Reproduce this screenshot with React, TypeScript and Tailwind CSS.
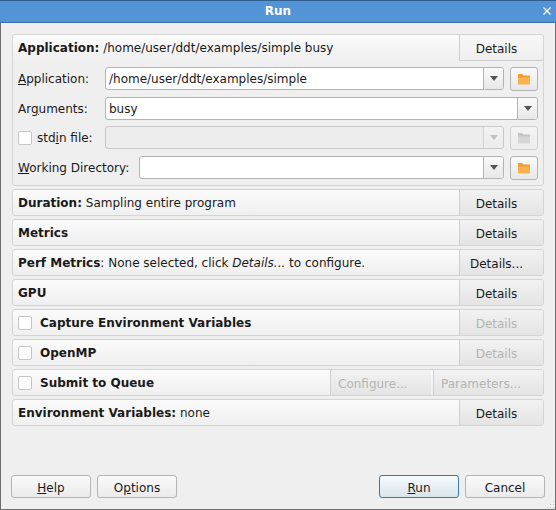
import type { ReactNode } from 'react'

function Folder({ disabled }: { disabled?: boolean }) {
  const back = disabled ? '#c4c4c4' : '#f59a2c'
  const front = disabled ? '#d6d6d6' : '#fdb04e'
  return (
    <svg width="14" height="12" viewBox="0 0 14 12">
      <path d="M1 1.5 Q1 1 1.5 1 H5 L6.5 2.5 H12.5 Q13 2.5 13 3 V5 H1 Z" fill={back} />
      <path d="M1 4.5 H13 V11 Q13 11.5 12.5 11.5 H1.5 Q1 11.5 1 11 Z" fill={front} />
    </svg>
  )
}

function Arrow({ disabled }: { disabled?: boolean }) {
  return (
    <svg width="8" height="5" viewBox="0 0 8 5">
      <path d="M0 0 H8 L4 5 Z" fill={disabled ? '#c2c2c2' : '#555555'} />
    </svg>
  )
}

function Check() {
  return <span className="w-[14px] h-[14px] shrink-0 bg-white border border-[#c6c6c6] rounded-[2px]" />
}

function Combo({ value, disabled }: { value?: string; disabled?: boolean }) {
  return (
    <div
      className={
        'flex-1 min-w-0 h-[23px] flex border rounded-[3px] ' +
        (disabled ? 'border-[#c8c8c8] bg-[#ededed]' : 'border-[#b4b4b4] bg-white')
      }
    >
      <div className="flex-1 min-w-0 pl-[3px] pt-px leading-[21px]">{value}</div>
      <div
        className={
          'w-[20px] flex items-center justify-center border-l rounded-r-[3px] bg-gradient-to-b ' +
          (disabled ? 'border-[#d2d2d2] from-[#f2f2f2] to-[#ececec]' : 'border-[#b4b4b4] from-[#fafafa] to-[#e8e8e8]')
        }
      >
        <Arrow disabled={disabled} />
      </div>
    </div>
  )
}

function FolderButton({ disabled }: { disabled?: boolean }) {
  return (
    <div
      className={
        'w-[28px] h-[24px] flex items-center justify-center border rounded-[3px] bg-gradient-to-b ' +
        (disabled ? 'border-[#d0d0d0] from-[#f4f4f4] to-[#ececec]' : 'border-[#b4b4b4] from-[#fafafa] to-[#e8e8e8]')
      }
    >
      <Folder disabled={disabled} />
    </div>
  )
}

function SideButton({ label, disabled }: { label: string; disabled?: boolean }) {
  return (
    <div
      className={
        'w-[84px] h-full flex items-center justify-center pt-[2px] pr-[10px] border-l border-[#cfcfcf] bg-gradient-to-b from-[#f2f2f2] to-[#e4e4e4] ' +
        (disabled ? 'text-[#b4b4b4]' : '')
      }
    >
      {label}
    </div>
  )
}

function FooterButton({ label, className }: { label: string; className: string }) {
  return (
    <div
      className={
        className +
        ' h-full flex items-center pt-[2px] border-l border-[#cfcfcf] bg-gradient-to-b from-[#f2f2f2] to-[#e4e4e4] text-[#b4b4b4]'
      }
    >
      {label}
    </div>
  )
}

function Row({ children, buttons }: { children: ReactNode; buttons: ReactNode }) {
  return (
    <div className="h-[27px] flex border border-[#d4d4d4] rounded-[3px] overflow-hidden bg-gradient-to-b from-[#fbfbfb] to-[#efefef]">
      <div className="flex-1 min-w-0 flex items-center pl-[5px] whitespace-nowrap">{children}</div>
      {buttons}
    </div>
  )
}

function DialogButton({ children, primary }: { children: ReactNode; primary?: boolean }) {
  return (
    <div
      className={
        'w-[80px] h-[23px] flex items-center justify-center pt-[2px] border rounded-[3px] bg-gradient-to-b ' +
        (primary ? 'border-[#3a7ba6] from-[#f6fafc] to-[#d8e4ec]' : 'border-[#b4b4b4] from-[#fafafa] to-[#ebebeb]')
      }
    >
      {children}
    </div>
  )
}

export default function App() {
  return (
    <div className="w-[556px] h-[510px] flex flex-col bg-[#efefef] text-[#1a1a1a] text-[12px] font-['DejaVu_Sans',sans-serif] border-x border-b border-[#6e6e6e]">
      <div className="h-[23px] shrink-0 -mx-px relative flex items-center justify-center pb-[2px] bg-[#5294d6] border-t border-b border-t-[#2f5f8f] border-b-[#3a6ea5] text-white font-bold">
        Run
        <span className="absolute right-[4px] top-[5px]">
          <svg width="10" height="10" viewBox="0 0 10 10">
            <path d="M1.5 1.5 L8.5 8.5 M8.5 1.5 L1.5 8.5" stroke="#ffffff" strokeWidth="1.4" />
          </svg>
        </span>
      </div>

      <div className="flex-1 flex flex-col pt-[11px] px-[11px] gap-[3px]">
        <div className="h-[152px] border border-[#d4d4d4] rounded-[3px] flex flex-col">
          <div className="h-[26px] shrink-0 flex bg-gradient-to-b from-[#fbfbfb] to-[#efefef] rounded-t-[3px]">
            <div className="flex-1 flex items-center pl-[5px] whitespace-pre">
              <b>Application:</b> /home/user/ddt/examples/simple busy
            </div>
            <div className="w-[84px] flex items-center justify-center pt-[2px] pr-[10px] border-l border-b border-[#cfcfcf] bg-gradient-to-b from-[#f7f7f7] to-[#efefef] rounded-tr-[3px]">
              Details
            </div>
          </div>
          <div className="flex-1 flex flex-col pl-[5px] pr-[5px] pt-[6px] gap-[6px]">
            <div className="flex items-start">
              <span className="w-[87px] h-[23px] shrink-0 leading-[23px] pt-px"><u>A</u>pplication:</span>
              <Combo value="/home/user/ddt/examples/simple" />
              <span className="w-[6px]" />
              <FolderButton />
            </div>
            <div className="flex items-start">
              <span className="w-[87px] h-[23px] shrink-0 leading-[23px] pt-px">Ar<u>g</u>uments:</span>
              <Combo value="busy" />
            </div>
            <div className="flex items-start">
              <span className="w-[87px] h-[23px] shrink-0 flex items-center gap-[5px]">
                <Check />
                <span>std<u>i</u>n file:</span>
              </span>
              <Combo disabled />
              <span className="w-[6px]" />
              <FolderButton disabled />
            </div>
            <div className="flex items-start">
              <span className="w-[121px] h-[23px] shrink-0 leading-[23px] pt-px"><u>W</u>orking Directory:</span>
              <Combo />
              <span className="w-[6px]" />
              <FolderButton />
            </div>
          </div>
        </div>

        <Row buttons={<SideButton label="Details" />}>
          <span className="whitespace-pre"><b>Duration:</b> Sampling entire program</span>
        </Row>
        <Row buttons={<SideButton label="Details" />}>
          <b>Metrics</b>
        </Row>
        <Row buttons={<SideButton label="Details..." />}>
          <b>Perf Metrics</b>
          <span className="whitespace-pre">: None selected, click <i>Details...</i> to configure.</span>
        </Row>
        <Row buttons={<SideButton label="Details" />}>
          <b>GPU</b>
        </Row>
        <Row buttons={<SideButton label="Details" disabled />}>
          <Check />
          <b className="ml-[8px]">Capture Environment Variables</b>
        </Row>
        <Row buttons={<SideButton label="Details" disabled />}>
          <Check />
          <b className="ml-[8px]">OpenMP</b>
        </Row>
        <Row
          buttons={
            <>
              <FooterButton label="Configure..." className="w-[101px] mr-[2px] pl-[7px]" />
              <FooterButton label="Parameters..." className="w-[110px] pl-[7px]" />
            </>
          }
        >
          <Check />
          <b className="ml-[8px]">Submit to Queue</b>
        </Row>
        <Row buttons={<SideButton label="Details" />}>
          <span className="whitespace-pre"><b>Environment Variables:</b> none</span>
        </Row>
      </div>

      <div className="h-[34px] shrink-0 relative flex items-start pl-[10px] pr-[10px] gap-[6px]">
        <DialogButton><span><u>H</u>elp</span></DialogButton>
        <DialogButton><span>O<u>p</u>tions</span></DialogButton>
        <span className="flex-1" />
        <DialogButton primary><span><u>R</u>un</span></DialogButton>
        <DialogButton>Cancel</DialogButton>
        <svg className="absolute right-0 bottom-0" width="10" height="10" viewBox="0 0 10 10">
          <g fill="#c4c4c4">
            <rect x="8" y="2" width="1" height="1" />
            <rect x="5" y="5" width="1" height="1" />
            <rect x="8" y="5" width="1" height="1" />
            <rect x="2" y="8" width="1" height="1" />
            <rect x="5" y="8" width="1" height="1" />
            <rect x="8" y="8" width="1" height="1" />
          </g>
        </svg>
      </div>
    </div>
  )
}
